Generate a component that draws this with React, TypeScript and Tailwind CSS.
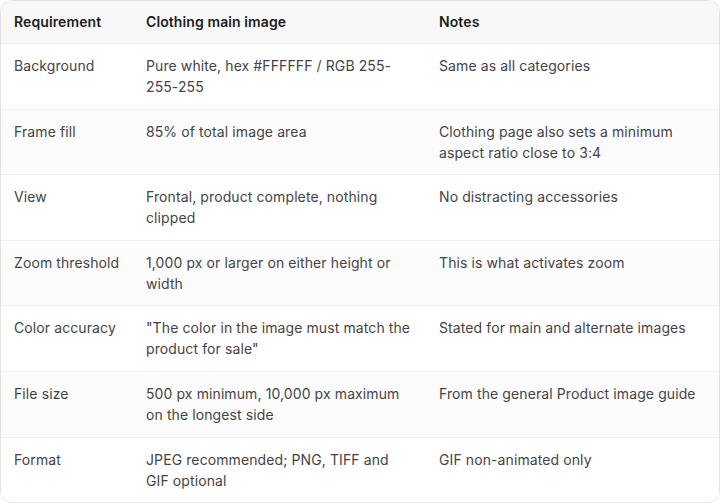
const rows: [string, string, string][] = [
  ['Background', 'Pure white, hex #FFFFFF / RGB 255-255-255', 'Same as all categories'],
  ['Frame fill', '85% of total image area', 'Clothing page also sets a minimum aspect ratio close to 3:4'],
  ['View', 'Frontal, product complete, nothing clipped', 'No distracting accessories'],
  ['Zoom threshold', '1,000 px or larger on either height or width', 'This is what activates zoom'],
  ['Color accuracy', '"The color in the image must match the product for sale"', 'Stated for main and alternate images'],
  ['File size', '500 px minimum, 10,000 px maximum on the longest side', 'From the general Product image guide'],
  ['Format', 'JPEG recommended; PNG, TIFF and GIF optional', 'GIF non-animated only'],
];

export default function App() {
  return (
    <div
      className="w-[720px] h-[504px] bg-white"
      style={{ fontFamily: 'Inter, "Noto Sans", sans-serif' }}
    >
      <div className="w-[720px] border border-[#e3e3e3] rounded-[12px] overflow-hidden">
        <table className="w-full table-fixed border-collapse text-[14px] leading-[21px] tracking-[0.1px]">
          <colgroup>
            <col className="w-[131px]" />
            <col className="w-[293px]" />
            <col />
          </colgroup>
          <thead>
            <tr className="bg-[#f8f8f8] border-b border-[#ececec]">
              <th className="text-left font-semibold text-[#1d1d1f] pl-[13px] pr-3 pt-[10px] pb-[11px]">Requirement</th>
              <th className="text-left font-semibold text-[#1d1d1f] pl-[14px] pr-3 pt-[10px] pb-[11px]">Clothing main image</th>
              <th className="text-left font-semibold text-[#1d1d1f] pl-[14px] pr-3 pt-[10px] pb-[11px]">Notes</th>
            </tr>
          </thead>
          <tbody>
            {rows.map(([req, main, notes], i) => (
              <tr
                key={req}
                className={`${i % 2 === 1 ? 'bg-[#fcfcfc]' : 'bg-white'} ${i < rows.length - 1 ? 'border-b border-[#f0f0f0]' : ''}`}
              >
                <td className="align-top text-[#444446] pl-[13px] pr-3 pt-[11px] pb-[11.6px]">{req}</td>
                <td className="align-top text-[#444446] pl-[14px] pr-[12px] pt-[11px] pb-[11.6px]">{main}</td>
                <td className="align-top text-[#444446] pl-[14px] pr-3 pt-[11px] pb-[11.6px]">{notes}</td>
              </tr>
            ))}
          </tbody>
        </table>
      </div>
    </div>
  );
}
